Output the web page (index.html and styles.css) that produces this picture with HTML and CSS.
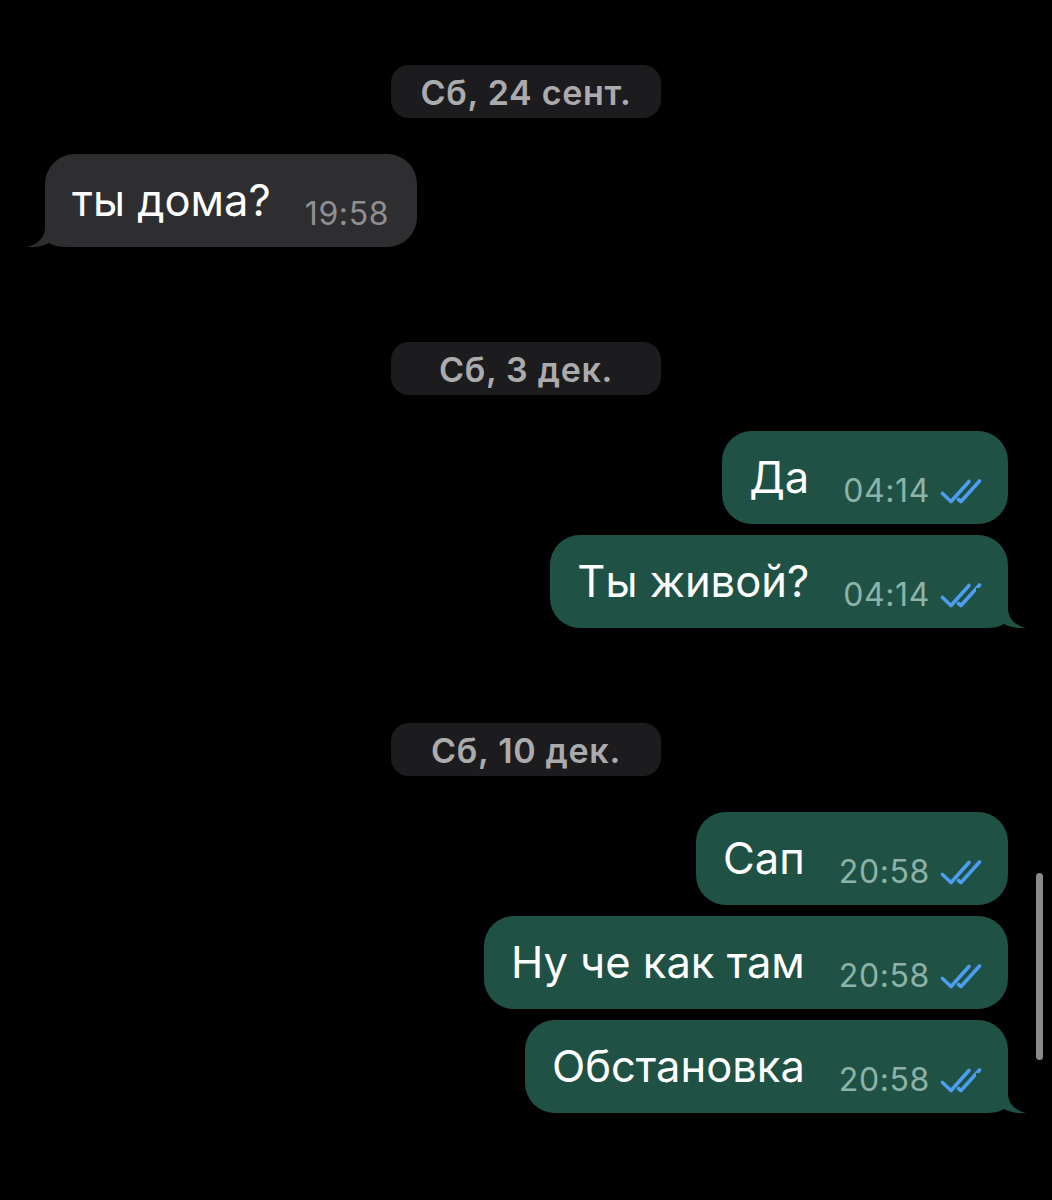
FILE: index.html
```html
<!DOCTYPE html>
<html lang="ru">
<head>
<meta charset="utf-8">
<title>Чат</title>
<link rel="stylesheet" href="styles.css">
</head>
<body>
<main class="chat">
  <section class="day">
    <div class="date-pill">Сб, 24 сент.</div>
    <div class="messages">
      <div class="bubble incoming last">
        <span class="text">ты дома?</span>
        <span class="meta"><span class="time">19:58</span></span>
        <svg class="tail tail-in" viewBox="0 0 50 40" width="50" height="40"><path d="M18 0 V20 C18 31 11 37 0 40 C8 40.6 16 39.2 22 36 C27 39 33 40 40 40 H50 V0 Z"/></svg>
      </div>
    </div>
  </section>

  <section class="day">
    <div class="date-pill">Сб, 3 дек.</div>
    <div class="messages">
      <div class="bubble outgoing">
        <span class="text">Да</span>
        <span class="meta"><span class="time">04:14</span><svg class="checks" viewBox="0 0 42 25" width="42" height="25"><path d="M2.5 14.5 L11 22.5 L29 2.5"/><path d="M18.5 20.5 L21 22.5 L39.5 2"/></svg></span>
      </div>
      <div class="bubble outgoing last">
        <span class="text">Ты живой?</span>
        <span class="meta"><span class="time">04:14</span><svg class="checks" viewBox="0 0 42 25" width="42" height="25"><path d="M2.5 14.5 L11 22.5 L29 2.5"/><path d="M18.5 20.5 L21 22.5 L39.5 2"/></svg></span>
        <svg class="tail tail-out" viewBox="0 0 50 40" width="50" height="40"><path d="M18 0 V20 C18 31 11 37 0 40 C8 40.6 16 39.2 22 36 C27 39 33 40 40 40 H50 V0 Z"/></svg>
      </div>
    </div>
  </section>

  <section class="day">
    <div class="date-pill">Сб, 10 дек.</div>
    <div class="messages">
      <div class="bubble outgoing">
        <span class="text">Сап</span>
        <span class="meta"><span class="time">20:58</span><svg class="checks" viewBox="0 0 42 25" width="42" height="25"><path d="M2.5 14.5 L11 22.5 L29 2.5"/><path d="M18.5 20.5 L21 22.5 L39.5 2"/></svg></span>
      </div>
      <div class="bubble outgoing">
        <span class="text">Ну че как там</span>
        <span class="meta"><span class="time">20:58</span><svg class="checks" viewBox="0 0 42 25" width="42" height="25"><path d="M2.5 14.5 L11 22.5 L29 2.5"/><path d="M18.5 20.5 L21 22.5 L39.5 2"/></svg></span>
      </div>
      <div class="bubble outgoing last">
        <span class="text">Обстановка</span>
        <span class="meta"><span class="time">20:58</span><svg class="checks" viewBox="0 0 42 25" width="42" height="25"><path d="M2.5 14.5 L11 22.5 L29 2.5"/><path d="M18.5 20.5 L21 22.5 L39.5 2"/></svg></span>
        <svg class="tail tail-out" viewBox="0 0 50 40" width="50" height="40"><path d="M18 0 V20 C18 31 11 37 0 40 C8 40.6 16 39.2 22 36 C27 39 33 40 40 40 H50 V0 Z"/></svg>
      </div>
    </div>
  </section>
  <div class="scrollbar"></div>
</main>
</body>
</html>
```

FILE: styles.css
```css
* { box-sizing: border-box; }
html, body {
  margin: 0;
  padding: 0;
  background: #000;
}
body {
  width: 1052px;
  height: 1200px;
  overflow: hidden;
  font-family: "Inter", "Noto Sans", "Liberation Sans", sans-serif;
  color: #fff;
}
.chat {
  position: relative;
  height: 1200px;
  display: flex;
  flex-direction: column;
  gap: 95px;
  padding-top: 65px;
}
.day {
  display: flex;
  flex-direction: column;
  gap: 36px;
}
.date-pill {
  align-self: center;
  width: 270px;
  height: 53px;
  border-radius: 18px;
  background: #1c1c1e;
  color: #ababad;
  font-size: 34px;
  font-weight: 600;
  display: flex;
  align-items: center;
  justify-content: center;
  letter-spacing: 0.7px;
  padding-top: 1px;
}
.messages {
  display: flex;
  flex-direction: column;
  gap: 11px;
}
.bubble {
  position: relative;
  height: 93px;
  border-radius: 30px;
  display: flex;
  align-items: flex-end;
  padding: 0 26px 0 27px;
}
.bubble.incoming {
  align-self: flex-start;
  margin-left: 45px;
  background: #2e2e30;
  padding-right: 28px;
}
.bubble.outgoing {
  align-self: flex-end;
  margin-right: 44px;
  background: #1f5245;
}
.text {
  font-size: 43.5px;
  line-height: 1;
  padding-bottom: 25px;
  white-space: nowrap;
}
.meta {
  display: flex;
  align-items: flex-end;
  margin-left: 34px;
  padding-bottom: 17px;
}
.time {
  font-size: 32px;
  line-height: 1;
  letter-spacing: 0.6px;
}
.incoming .time { color: #8e8e93; }
.outgoing .time { color: #8db3a8; }
.checks {
  margin-left: 10px;
  margin-bottom: 3px;
  fill: none;
  stroke: #4d9df2;
  stroke-width: 3.6;
  stroke-linecap: round;
  stroke-linejoin: round;
}
.tail {
  position: absolute;
  bottom: 0;
}
.tail-in {
  left: -18px;
  fill: #2e2e30;
}
.tail-out {
  right: -18px;
  fill: #1f5245;
  transform: scaleX(-1);
}
.scrollbar {
  position: absolute;
  left: 1036px;
  top: 873px;
  width: 7px;
  height: 187px;
  border-radius: 4px;
  background: #8a8a8e;
}
```
